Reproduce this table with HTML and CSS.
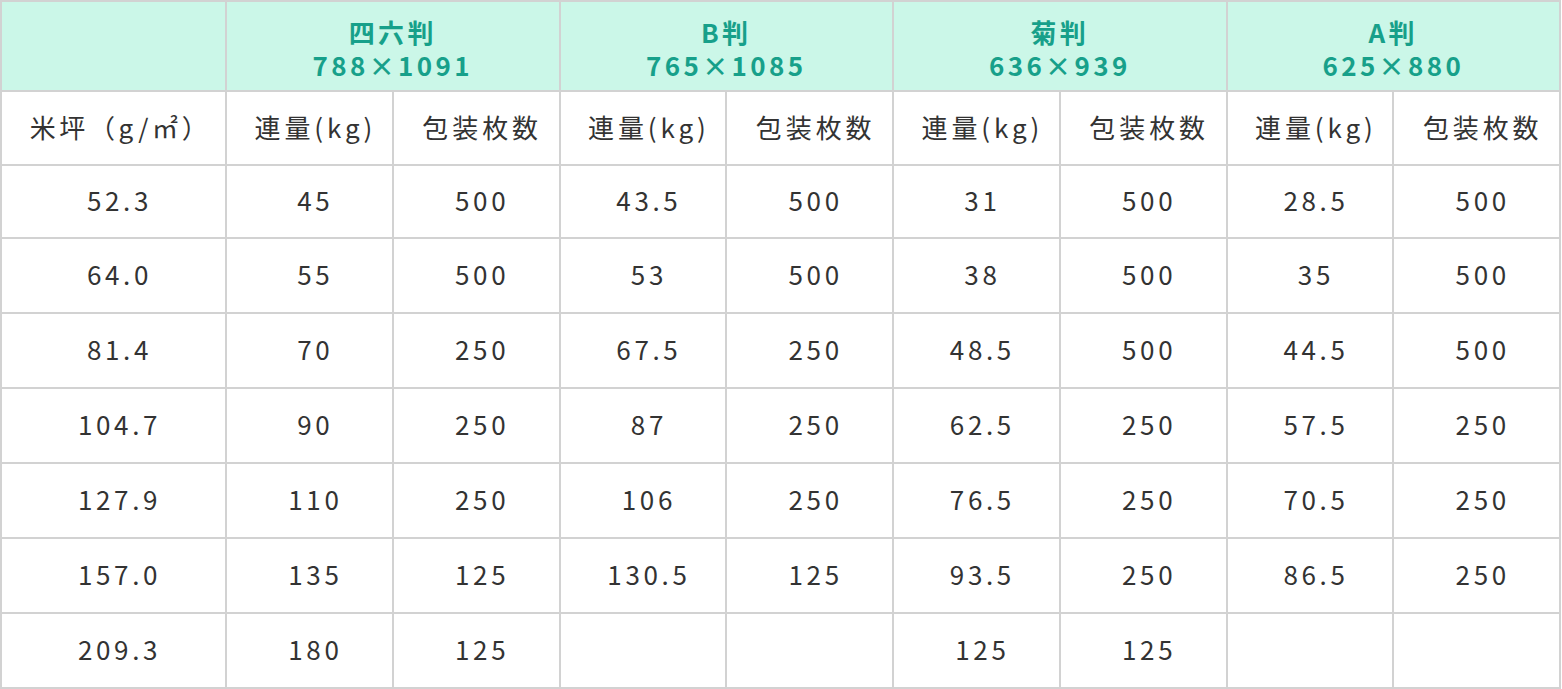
FILE: index.html
```html
<!DOCTYPE html>
<html lang="ja">
<head>
<meta charset="utf-8">
<link rel="stylesheet" href="styles.css">
</head>
<body>
<table class="paper">
  <colgroup>
    <col class="c0"><col class="c"><col class="c"><col class="c"><col class="c"><col class="c"><col class="c"><col class="c"><col class="c">
  </colgroup>
  <thead>
    <tr class="size-row">
      <th class="blank"></th>
      <th colspan="2">四六判<br>788×1091</th>
      <th colspan="2">B判<br>765×1085</th>
      <th colspan="2">菊判<br>636×939</th>
      <th colspan="2">A判<br>625×880</th>
    </tr>
    <tr class="label-row">
      <td class="unit">米坪（g/㎡）</td>
      <td>連量(kg)</td><td>包装枚数</td>
      <td>連量(kg)</td><td>包装枚数</td>
      <td>連量(kg)</td><td>包装枚数</td>
      <td>連量(kg)</td><td>包装枚数</td>
    </tr>
  </thead>
  <tbody>
    <tr class="first"><td>52.3</td><td>45</td><td>500</td><td>43.5</td><td>500</td><td>31</td><td>500</td><td>28.5</td><td>500</td></tr>
    <tr><td>64.0</td><td>55</td><td>500</td><td>53</td><td>500</td><td>38</td><td>500</td><td>35</td><td>500</td></tr>
    <tr><td>81.4</td><td>70</td><td>250</td><td>67.5</td><td>250</td><td>48.5</td><td>500</td><td>44.5</td><td>500</td></tr>
    <tr><td>104.7</td><td>90</td><td>250</td><td>87</td><td>250</td><td>62.5</td><td>250</td><td>57.5</td><td>250</td></tr>
    <tr><td>127.9</td><td>110</td><td>250</td><td>106</td><td>250</td><td>76.5</td><td>250</td><td>70.5</td><td>250</td></tr>
    <tr><td>157.0</td><td>135</td><td>125</td><td>130.5</td><td>125</td><td>93.5</td><td>250</td><td>86.5</td><td>250</td></tr>
    <tr><td>209.3</td><td>180</td><td>125</td><td></td><td></td><td>125</td><td>125</td><td></td><td></td></tr>
  </tbody>
</table>
</body>
</html>
```

FILE: styles.css
```css
html, body {
  margin: 0;
  padding: 0;
  background: #ffffff;
}
.paper {
  border-collapse: collapse;
  table-layout: fixed;
  width: 1559px;
  font-family: "Noto Sans CJK JP", "Noto Sans", sans-serif;
  color: #333333;
}
.c0 { width: 225px; }
.c { width: 166.75px; }
.paper th,
.paper td {
  border: 2px solid #d2d2d2;
  text-align: center;
  vertical-align: middle;
  padding: 0 0 4px 12px;
  font-size: 26px;
  letter-spacing: 0.14em;
  font-weight: 400;
}
.paper .label-row td {
  height: 68px;
  letter-spacing: 0.15em;
}
.paper .label-row .unit {
  padding: 0 0 4px 14px;
  letter-spacing: 0.14em;
}
.paper .size-row th {
  background: #cbf7e8;
  color: #17a08a;
  font-weight: 700;
  font-size: 26px;
  letter-spacing: 0.13em;
  line-height: 33px;
  height: 90px;
  padding: 4px 0 0 0;
  box-sizing: border-box;
}
tbody td {
  height: 69px;
}
tbody .first td {
  height: 67px;
}
```
